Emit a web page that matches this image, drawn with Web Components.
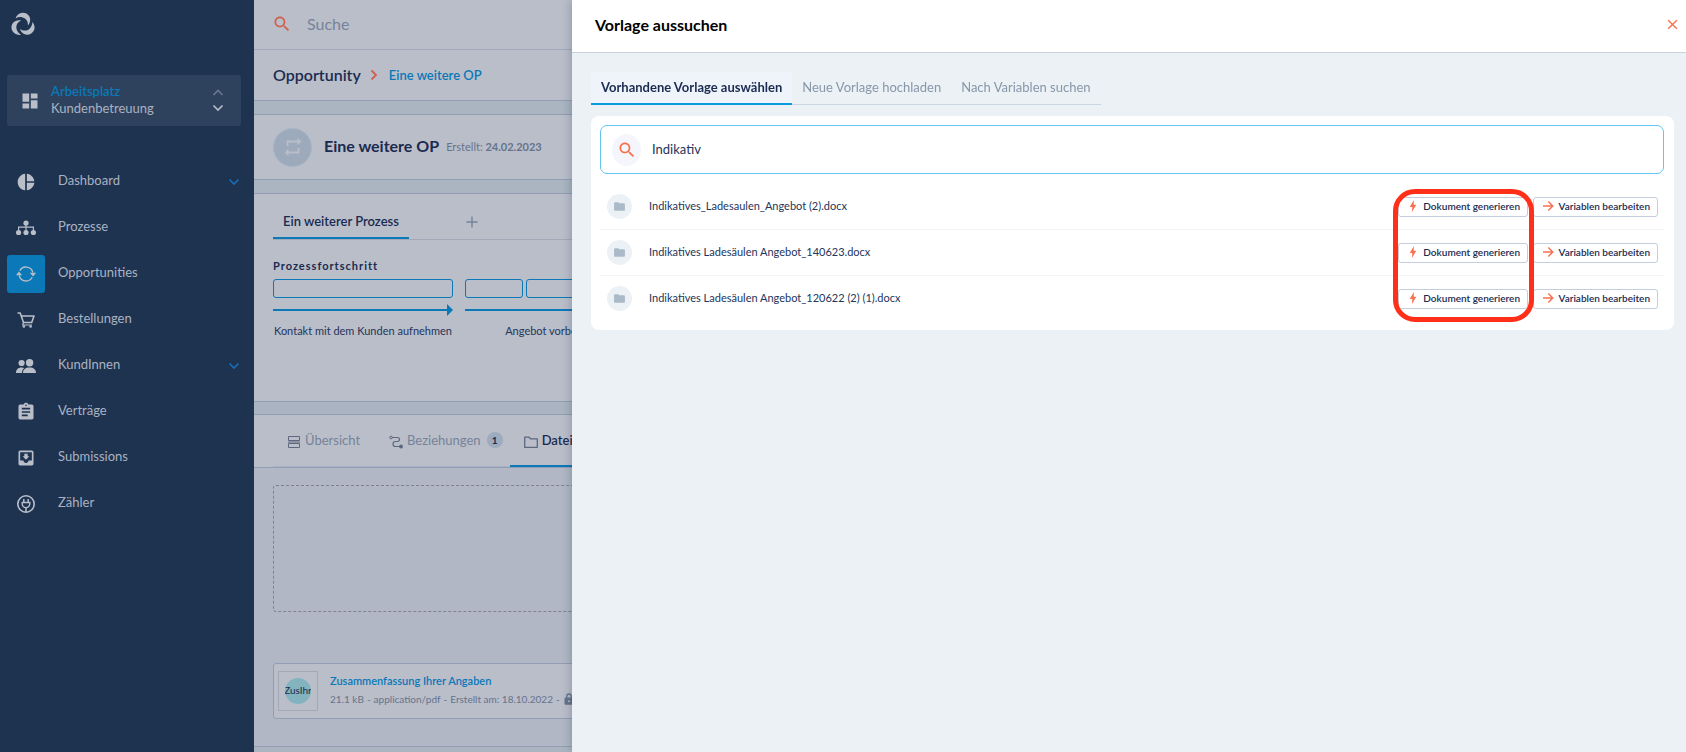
<!DOCTYPE html>
<html lang="de">
<head>
<meta charset="utf-8">
<title>Vorlage aussuchen</title>
<style>
  html, body { margin: 0; height: 100%; }
  body {
    font-family: Lato, "Liberation Sans", sans-serif;
    font-size: 13px;
    color: #1b2b50;
    overflow: hidden;
    --blue: #0b78b8;
    --line: #939eb4;
    --panel: #babec9;
  }
</style>
</head>
<body>
<crm-app></crm-app>
<script>
const define = (name, html, setup) => {
  const template = document.createElement('template');
  template.innerHTML = html;
  customElements.define(name, class extends HTMLElement {
    connectedCallback() {
      if (this.shadowRoot) return;
      const root = this.attachShadow({ mode: 'open' });
      root.append(template.content.cloneNode(true));
      if (setup) setup(root, this);
    }
  });
};

const CRESCENT = 'M4.600 6.400C5.800 2.900 8.800.8 12 .8c4.200 0 7.400 3.300 7.200 7.300-.1 2.200-.9 4-2.300 5.500C17.300 9.600 15.300 6.300 11.600 5.400 9 4.800 6.600 5.200 4.600 6.400z';
const ICONS = {
  logo: ['0 0 24 24', `<g fill="currentColor"><path d="${CRESCENT}"/><path d="${CRESCENT}" transform="rotate(120 12 13)"/><path d="${CRESCENT}" transform="rotate(240 12 13)"/></g>`],
  dashboard: ['0 0 24 24', '<path fill="currentColor" d="M3 13h8V3H3v10zm0 8h8v-6H3v6zm10 0h8V11h-8v10zm0-18v6h8V3h-8z"/>'],
  pie: ['0 0 24 24', '<path fill="currentColor" d="M11 2v20c-5.070-.5-9-4.790-9-10s3.930-9.500 9-10zm2.030 0v8.990H22c-.47-4.740-4.240-8.520-8.970-8.990zm0 11.010V22c4.740-.47 8.500-4.250 8.970-8.990h-8.970z"/>'],
  tree: ['0 0 20 20', '<g fill="currentColor"><circle cx="10" cy="5" r="2.600"/><circle cx="2.600" cy="14.500" r="2.600"/><circle cx="10" cy="14.500" r="2.600"/><circle cx="17.400" cy="14.500" r="2.600"/></g><path d="M10 6v8M2.600 12V9.200h14.800V12" fill="none" stroke="currentColor" stroke-width="1.200"/>'],
  sync: ['0 0 20 20', '<path d="M3.200 11.500a7 7 0 0 0 13 1.800M16.800 8.500A7 7 0 0 0 3.800 6.700" fill="none" stroke="currentColor" stroke-width="1.300"/><path fill="currentColor" d="M0 11.200 2.900 7.600l3.300 3.600zM13.800 8.800H20l-2.900 3.600z"/>'],
  cart: ['0 0 20 20', '<path d="M1.500 3h2.700l3.300 9.500h8.200L18 6H5.300" fill="none" stroke="currentColor" stroke-width="1.600" stroke-linejoin="round"/><path d="M7.500 12.500 6.700 15H16" fill="none" stroke="currentColor" stroke-width="1.200"/><circle cx="7.900" cy="16.500" r="1.300" fill="currentColor"/><circle cx="14.600" cy="16.500" r="1.300" fill="currentColor"/>'],
  people: ['0 0 20 20', '<g fill="currentColor"><circle cx="5.600" cy="7" r="3.100"/><circle cx="13.600" cy="6.700" r="3.700"/><path d="M0 17c0-3.500 2-5.600 5.600-5.600 1 0 2 .2 2.700.6C6.700 13 6 15 6 17zM7 17c0-3.800 2.500-5.600 6.500-5.600S20 13.200 20 17z"/></g>'],
  clipboard: ['0 0 24 24', '<path fill="currentColor" d="M19 3h-4.180C14.400 1.840 13.300 1 12 1c-1.300 0-2.400.84-2.820 2H5c-1.100 0-2 .9-2 2v14c0 1.100.9 2 2 2h14c1.100 0 2-.9 2-2V5c0-1.100-.9-2-2-2zm-7 0c.55 0 1 .45 1 1s-.45 1-1 1-1-.45-1-1 .45-1 1-1zm2 14H7v-2h7v2zm3-4H7v-2h10v2zm0-4H7V7h10v2z"/>'],
  inbox: ['0 0 24 24', '<path fill="currentColor" d="M19 3H4.990c-1.110 0-1.980.9-1.980 2L3 19c0 1.100.88 2 1.990 2H19c1.100 0 2-.9 2-2V5c0-1.100-.9-2-2-2zm0 12h-4c0 1.660-1.350 3-3 3s-3-1.340-3-3H4.990V5H19v10zm-3-5h-2V7h-4v3H8l4 4 4-4z"/>'],
  plug: ['0 0 20 20', '<circle cx="10" cy="10" r="8.200" fill="none" stroke="currentColor" stroke-width="1.600"/><path d="M7.800 5v3M12.200 5v3M10 13v5" stroke="currentColor" stroke-width="1.500"/><path d="M6.200 8.500h7.600v1.300a3.800 3.800 0 0 1-7.600 0z" fill="none" stroke="currentColor" stroke-width="1.400"/>'],
  search: ['0 0 24 24', '<path fill="currentColor" d="M15.500 14h-.79l-.28-.27C15.410 12.590 16 11.110 16 9.500 16 5.910 13.090 3 9.500 3S3 5.910 3 9.500 5.910 16 9.500 16c1.610 0 3.090-.59 4.230-1.570l.27.28v.79l5 4.990L20.490 19l-4.990-5zm-6 0C7.010 14 5 11.990 5 9.500S7.010 5 9.500 5 14 7.010 14 9.500 11.990 14 9.500 14z"/>'],
  repeat: ['0 0 24 24', '<path fill="currentColor" d="M7 7h10v3l4-4-4-4v3H5v6h2V7zm10 10H7v-3l-4 4 4 4v-3h12v-6h-2v4z"/>'],
  down: ['0 0 12 12', '<path d="M1.500 3.500 6 8l4.500-4.500" fill="none" stroke="currentColor" stroke-width="1.600"/>'],
  up: ['0 0 12 12', '<path d="M1.500 8 6 3.500 10.500 8" fill="none" stroke="currentColor" stroke-width="1.600"/>'],
  right: ['0 0 12 12', '<path d="M3.500 1.500 8 6l-4.500 4.500" fill="none" stroke="currentColor" stroke-width="1.800"/>'],
  plus: ['0 0 12 12', '<path d="M6 .5v11M.5 6h11" stroke="currentColor" stroke-width="1.400"/>'],
  close: ['0 0 12 12', '<path d="m2 2 8 8m0-8-8 8" stroke="currentColor" stroke-width="1.300"/>'],
  rows: ['0 0 14 14', '<path d="M1.500 1.500h11v4h-11zM1.500 8.500h11v4h-11zM1 7h12" fill="none" stroke="currentColor" stroke-width="1"/>'],
  route: ['0 0 14 14', '<path d="M3 2.500h5.500a2 2 0 0 1 0 4H6.500a2.500 2.500 0 0 0 0 5H12" fill="none" stroke="currentColor" stroke-width="1.200"/><circle cx="2" cy="2.500" r="1.300" fill="none" stroke="currentColor"/><circle cx="12" cy="11.500" r="1.900" fill="currentColor"/>'],
  folderLine: ['0 0 14 14', '<path d="M.7 2.200h4.300l1.500 1.600h6.800v8.500H.7z" fill="none" stroke="currentColor" stroke-width="1.300" stroke-linejoin="round"/>'],
  folder: ['0 0 24 24', '<path fill="currentColor" d="M10 4H4c-1.100 0-1.990.9-1.990 2L2 18c0 1.100.9 2 2 2h16c1.100 0 2-.9 2-2V8c0-1.100-.9-2-2-2h-8l-2-2z"/>'],
  lock: ['0 0 12 12', '<path d="M3.700 5V3.300a2.300 2.300 0 0 1 4.600 0V5" fill="none" stroke="currentColor" stroke-width="1.300"/><path fill="currentColor" fill-rule="evenodd" d="M2.500 4.600h7a1 1 0 0 1 1 1v5.200a1 1 0 0 1-1 1h-7a1 1 0 0 1-1-1V5.600a1 1 0 0 1 1-1zM6 7.200a1 1 0 1 0 0 2 1 1 0 0 0 0-2z"/>'],
  bolt: ['0 0 12 12', '<path fill="currentColor" d="M6.900 0 2.700 6.900h2.600L5 12l4.300-7.200H6.700z"/>'],
  arrow: ['0 0 12 12', '<path d="M1 6h9.500M6.300 1.500 10.800 6l-4.500 4.500" fill="none" stroke="currentColor" stroke-width="1.400"/>'],
};

define('crm-icon', `
  <style>:host{display:inline-flex;flex:none;width:var(--size,20px);height:var(--size,20px)} svg{width:100%;height:100%;display:block}</style>
`, (root, host) => {
  const [box, body] = ICONS[host.getAttribute('name')];
  root.innerHTML += `<svg viewBox="${box}" aria-hidden="true">${body}</svg>`;
});

define('nav-entry', `
  <style>
    :host{display:block;color:#aab2c2}
    a{display:flex;align-items:center;height:46px;padding:0 14px 0 7px;color:inherit;text-decoration:none}
    .tile{display:grid;place-items:center;width:38px;height:38px;border-radius:3px;margin-right:13px;color:#babec9}
    :host([active]) .tile{background:var(--blue)}
    .label{flex:1;padding-bottom:4px;line-height:18px}
    .chev{color:#1b6cb8;--size:12px}
    :host(:not([expandable])) .chev{display:none}
  </style>
  <a href="#"><span class="tile"></span><span class="label"><slot></slot></span><crm-icon class="chev" name="down"></crm-icon></a>
`, (root, host) => {
  root.querySelector('.tile').innerHTML = `<crm-icon name="${host.getAttribute('icon')}"></crm-icon>`;
});

define('crm-sidebar', `
  <style>
    :host{display:block;background:#1e3350;overflow:hidden}
    .logo{display:block;--size:24px;color:#babec9;margin:12px 0 0 11px;height:24px}
    button{display:flex;align-items:center;width:234px;height:51px;margin:39px 0 33px 7px;padding:0 17px 0 13px;border:0;border-radius:3px;background:#2e425e;font:inherit;text-align:left;color:#aab2c2;line-height:17px}
    button > crm-icon{color:#babec9;--size:20px;margin-right:11px}
    .names{flex:1;display:grid;padding-bottom:2px} b{font-weight:600;color:var(--blue)}
    .arrows{display:grid;gap:3px;--size:12px;color:#babec9}
    .arrows :first-child{color:#6b7a8f}
  </style>
  <crm-icon class="logo" name="logo"></crm-icon>
  <button type="button"><crm-icon name="dashboard"></crm-icon><span class="names"><b>Arbeitsplatz</b><span>Kundenbetreuung</span></span><span class="arrows"><crm-icon name="up"></crm-icon><crm-icon name="down"></crm-icon></span></button>
  <nav>
    <nav-entry icon="pie" expandable>Dashboard</nav-entry>
    <nav-entry icon="tree">Prozesse</nav-entry>
    <nav-entry icon="sync" active>Opportunities</nav-entry>
    <nav-entry icon="cart">Bestellungen</nav-entry>
    <nav-entry icon="people" expandable>KundInnen</nav-entry>
    <nav-entry icon="clipboard">Verträge</nav-entry>
    <nav-entry icon="inbox">Submissions</nav-entry>
    <nav-entry icon="plug">Zähler</nav-entry>
  </nav>
`);

define('process-stage', `
  <style>
    :host{display:block;width:180px;flex:none;text-align:center;font-size:11px;line-height:14px;color:#24355b}
    .steps{display:flex;gap:3px} .steps i{flex:1;box-sizing:border-box;height:19px;border:1px solid var(--blue);border-radius:3px}
    .line{display:flex;align-items:center;height:12px;margin:6px 0 8px}
    .line::before{content:"";flex:1;height:2px;background:var(--blue)}
    .line::after{content:"";border:6px solid transparent;border-left-color:var(--blue);border-right:0}
  </style>
  <div class="steps"></div><div class="line"></div><slot></slot>
`, (root, host) => {
  root.querySelector('.steps').innerHTML = '<i></i>'.repeat(+host.getAttribute('steps'));
});

define('crm-main', `
  <style>
    :host{display:block;background:#abb5c1;overflow:hidden;white-space:nowrap}
    button{font:inherit;color:inherit;background:none;border:0;padding:0}
    section,header{box-sizing:border-box;background:var(--panel);display:flex;align-items:center;padding:0 19px}
    section{border:solid var(--line);border-width:1px 0;margin-bottom:13px}
    header{height:50px;border-bottom:1px solid #a3a9bd;gap:15px;padding:0 19px 2px 18px}
    header crm-icon{color:#cf5f4f;--size:20px}
    input{border:0;background:none;font:inherit;font-size:16px;color:#76839a;padding:0;outline:0;flex:1} input::placeholder{color:#76839a}
    a{color:var(--blue);font-weight:600;text-decoration:none}
    .crumbs{height:51px;border-top:0;padding-bottom:1px} .crumbs b{font-size:16px;font-weight:600}
    .crumbs crm-icon{--size:12px;color:#cf5f4f;margin:0 9px 0 7px}
    .title{height:66px} .disc{box-sizing:border-box;display:grid;place-items:center;width:39px;height:39px;border-radius:50%;background:#9caabc;border:1px solid #a5b5c8;color:#babec9;--size:22px;margin-right:12px}
    h1{font-size:16px;font-weight:700;margin:0 7px 0 0;padding-bottom:3px} small{font-size:11px;color:#66738c;padding-bottom:1px}
    .process{height:209px;display:block;margin-bottom:12px}
    .ptabs{display:flex;align-items:stretch;height:45px;border-bottom:1px solid #a3a9b9}
    .ptabs button{font-weight:600;width:136px;padding-top:11px;border-bottom:2px solid var(--blue)}
    .ptabs .add{width:auto;border:0;padding:11px 0 0;margin-left:57px;color:#76839a;--size:12px;display:grid;place-items:center}
    h2{font-size:11px;line-height:16px;font-weight:700;letter-spacing:1px;margin:18px 0 5px}
    .stages{display:flex;gap:12px}
    .tabs{height:54px;margin:0;align-items:stretch;padding-right:0}
    .tabs button{display:flex;align-items:center;color:#76839a;border-bottom:1px solid #a6b3c4;padding:0 15px 2px 0;gap:4px}
    .tabs crm-icon{--size:14px;color:#5d687e;margin-top:4px}
    .tabs .first{padding:0 29px 2px 14px} .tabs .on{color:#1b2b50;font-weight:600;border-bottom:2px solid var(--blue);padding:0 0 1px 14px;flex:1}
    .tabs .mid{padding-right:7px}
    .badge{width:16px;height:16px;border-radius:50%;background:#9cabbe;color:#1b2b50;font-size:10px;line-height:16px;font-weight:700;margin-left:2px}
    .files{background:#b1b7c4;padding:17px 19px 27px;border-bottom:1px solid var(--line)}
    .drop{box-sizing:border-box;height:127px;border:1px dashed #7f838e;border-radius:3px;margin-bottom:51px}
    .file{box-sizing:border-box;height:56px;border:1px solid var(--line);border-radius:3px;background:var(--panel);display:flex;align-items:center;padding:0 4px;font-size:11px;line-height:18px;color:#66738c}
    .file > div{padding-bottom:2px}
    .thumb{box-sizing:border-box;width:40px;height:40px;border:1px solid #a1a8b6;display:grid;place-items:center;margin-right:12px}
    .thumb span{width:26px;height:26px;border-radius:50%;background:#84b3c0;color:#1b2b50;font-size:10px;line-height:24px;overflow:hidden;display:flex;justify-content:center}
    .meta{display:flex;align-items:center;gap:3px;--size:12px;color:#66738c;font-size:10px}
  </style>
  <header><crm-icon name="search"></crm-icon><input type="search" placeholder="Suche" aria-label="Suche"></header>
  <section class="crumbs"><b>Opportunity</b><crm-icon name="right"></crm-icon><a href="#">Eine weitere OP</a></section>
  <section class="title"><span class="disc"><crm-icon name="repeat"></crm-icon></span><h1>Eine weitere OP</h1><small>Erstellt: <b>24.02.2023</b></small></section>
  <section class="process">
    <div class="ptabs"><button type="button">Ein weiterer Prozess</button><button type="button" class="add" aria-label="Hinzufügen"><crm-icon name="plus"></crm-icon></button></div>
    <h2>Prozessfortschritt</h2>
    <div class="stages"><process-stage steps="1">Kontakt mit dem Kunden aufnehmen</process-stage><process-stage steps="3">Angebot vorbereiten</process-stage></div>
  </section>
  <section class="tabs"><button type="button" class="first"><crm-icon name="rows"></crm-icon>Übersicht</button><button type="button" class="mid"><crm-icon name="route"></crm-icon>Beziehungen<span class="badge">1</span></button><button type="button" class="on"><crm-icon name="folderLine"></crm-icon>Dateien</button></section>
  <div class="files">
    <div class="drop"></div>
    <div class="file"><span class="thumb"><span>ZusIhr</span></span><div><a href="#">Zusammenfassung Ihrer Angaben</a><div class="meta">21.1 kB<span>-</span>application/pdf<span>-</span>Erstellt am: 18.10.2022<span>-</span><crm-icon name="lock"></crm-icon></div></div></div>
  </div>
`);

define('action-button', `
  <style>
    :host{display:block}
    button{box-sizing:border-box;display:flex;align-items:center;width:100%;height:20px;border:1px solid #c3cddb;border-radius:3px;background:#fff;padding:0 7px 1px 8px;font:600 10px/14px Lato,"Liberation Sans",sans-serif;color:#1b2b50;white-space:nowrap}
    crm-icon{--size:12px;color:#f9704f} span{flex:1;text-align:right}
  </style>
  <button type="button"><span><slot></slot></span></button>
`, (root, host) => {
  root.querySelector('button').insertAdjacentHTML('afterbegin', `<crm-icon name="${host.getAttribute('icon')}"></crm-icon>`);
});

define('template-row', `
  <style>
    :host{box-sizing:border-box;display:flex;align-items:center;height:46px;padding:0 6px 0 7px;font-size:11px;line-height:16px;color:#24355b;border-bottom:1px solid #f1f4f9}
    :host(:last-of-type){border-bottom-color:transparent}
    .disc{display:grid;place-items:center;width:25px;height:25px;border-radius:50%;background:#ebf1f5;color:#abbac8;--size:13px;margin-right:17px}
    .name{flex:1;padding-bottom:1px}
    .gen{width:130px;margin-right:5px} .edit{width:125px}
  </style>
  <span class="disc"><crm-icon name="folder"></crm-icon></span><span class="name"><slot></slot></span>
  <action-button class="gen" icon="bolt">Dokument generieren</action-button>
  <action-button class="edit" icon="arrow">Variablen bearbeiten</action-button>
`);

define('template-drawer', `
  <style>
    :host{display:block;background:#ebf1f5;box-shadow:0 0 10px #1e335055}
    header{box-sizing:border-box;height:53px;display:flex;align-items:center;justify-content:space-between;background:#fff;border-bottom:1px solid #c9d1de;padding:0 7px 3px 23px}
    h2{margin:0;font-size:16px;font-weight:700;color:#000}
    button{font:inherit;background:none;border:0;padding:0}
    .close{display:grid;color:#f9704f;--size:13px}
    .tabs{display:flex;margin:19px 0 11px 19px}
    .tabs button{box-sizing:border-box;height:33px;border-bottom:1px solid #cbd5e2;color:#8796a9;padding:0 10px 3px;white-space:nowrap}
    .tabs .on{background:#eff4fb;color:#1b2b50;font-weight:700;border-bottom:2px solid #0b9ae0;padding-bottom:2px}
    .card{position:relative;background:#fff;border-radius:8px;margin:0 12px 0 19px;padding:9px 10px 8px 9px}
    label{box-sizing:border-box;display:flex;align-items:center;height:49px;border:1px solid #63c5ee;border-radius:7px;padding:0 11px;margin-bottom:10px}
    label span{display:grid;place-items:center;width:29px;height:32px;border-radius:50%;background:#f4f6fb;color:#f9704f;--size:20px;margin-right:11px}
    input{flex:1;border:0;outline:0;background:none;font:inherit;color:#24355b;padding:0 0 1px}
    .mark{position:absolute;right:140px;top:73px;width:141px;height:133px;box-sizing:border-box;border:5px solid #ff2f18;border-radius:22px;pointer-events:none}
  </style>
  <header><h2>Vorlage aussuchen</h2><button type="button" class="close" aria-label="Schließen"><crm-icon name="close"></crm-icon></button></header>
  <div class="tabs"><button type="button" class="on">Vorhandene Vorlage auswählen</button><button type="button">Neue Vorlage hochladen</button><button type="button">Nach Variablen suchen</button></div>
  <div class="card">
    <label><span><crm-icon name="search"></crm-icon></span><input type="text" value="Indikativ" aria-label="Vorlage suchen"></label>
    <template-row>Indikatives_Ladesaulen_Angebot (2).docx</template-row>
    <template-row>Indikatives Ladesäulen Angebot_140623.docx</template-row>
    <template-row>Indikatives Ladesäulen Angebot_120622 (2) (1).docx</template-row>
    <div class="mark"></div>
  </div>
`);

define('crm-app', `
  <style>
    :host{display:grid;grid-template-columns:254px 1fr;height:100vh}
    template-drawer{position:fixed;inset:0 0 0 572px}
  </style>
  <crm-sidebar></crm-sidebar><crm-main></crm-main><template-drawer></template-drawer>
`);
</script>
</body>
</html>
